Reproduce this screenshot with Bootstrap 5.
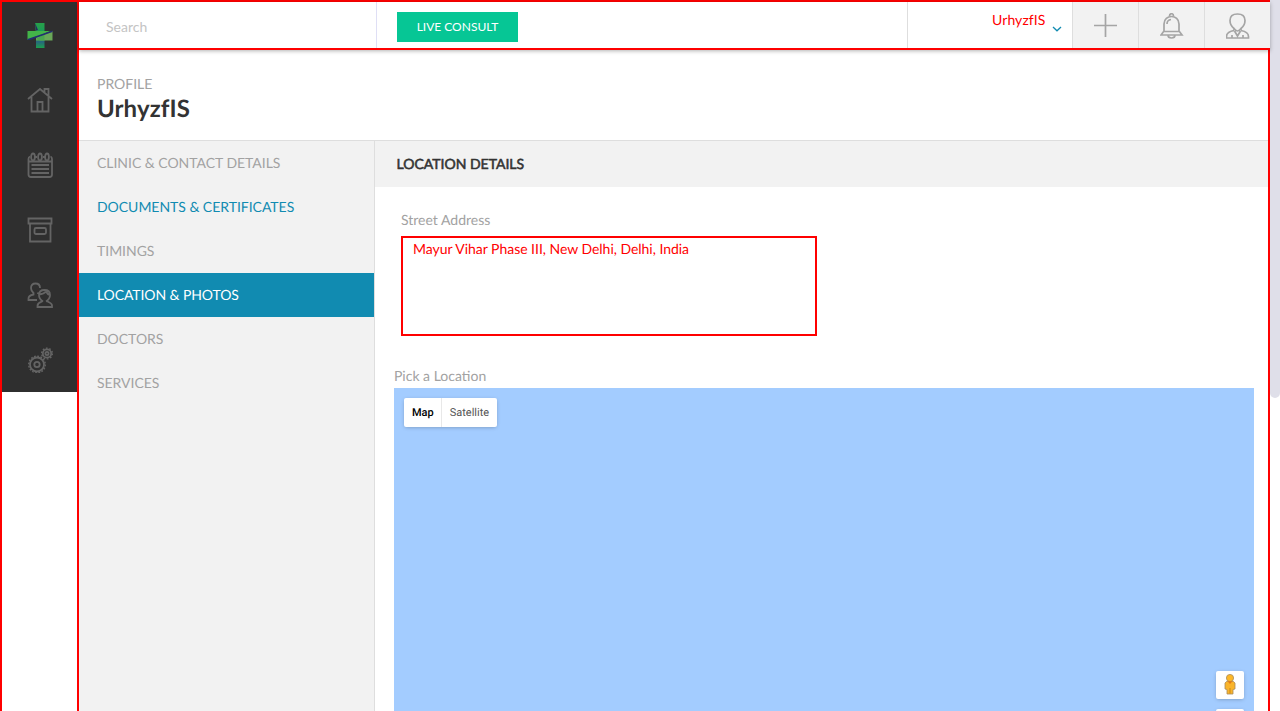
<!DOCTYPE html>
<html lang="en">
<head>
<meta charset="utf-8">
<meta name="viewport" content="width=device-width, initial-scale=1">
<title>Profile</title>
<link href="https://cdn.jsdelivr.net/npm/bootstrap@5.3.0/dist/css/bootstrap.min.css" rel="stylesheet">
<style>
body{font-family:Lato,sans-serif;font-size:14px;line-height:20px;color:#333;height:100vh;overflow:hidden;background:#fff;text-rendering:geometricPrecision}
.shell{border:2px solid red;border-width:2px 0 0 2px;height:100vh;width:1270px}
.rail{width:77px;border-right:2px solid red}
.rail nav{background:#2f2f2f;height:390px}
.rail nav a{height:65px;padding-top:20px}
.rail svg{width:26px;height:26px;display:block;fill:none;stroke:#646464;stroke-width:1.8}
.topbar{height:48px;border-bottom:2px solid red;box-shadow:0 1px 4px rgba(0,0,0,.3);position:relative;background:#fff}
.search{width:298px;border-right:1px solid #dfdff5}
.search input{font-size:14px;padding:2px 0 0 27px;color:#999}
.search input::placeholder{color:#c4c4c4;opacity:1}
.consult{background:#06c695;color:#fff;font-size:12px;line-height:18px;width:121px;height:30px;border-radius:0;margin:10px 0 0 20px;padding:6px 0}
.account{width:165px;border-left:1px solid #dedede;color:red;padding:8px 10px 0 84px}
.account span{letter-spacing:.1px}
.tool{width:66px;background:#f2f2f2;border-left:1px solid #dedede;padding:2px 0 0}
.tool svg{fill:none;stroke:#a5a5a5;stroke-width:1.7}
.page{border-right:2px solid red}
.title{height:91px;border-bottom:1px solid #dedede;padding:24px 18px 0}
.title h1{font-size:24px;line-height:30px;font-weight:700;color:#333;letter-spacing:.1px}
.soft{color:#a2a2a2}
.menu{width:296px;background:#f2f2f2;border-right:1px solid #dedede}
.menu a:not([href]){height:44px;padding:12px 18px;color:#a2a2a2;text-decoration:none;display:block;letter-spacing:-.03px}
.menu a.visited-step:not([href]){color:#118bb1}
.menu a.current:not([href]){background:#118bb1;color:#fff;letter-spacing:-.1px}
.section-head{height:46px;background:#f2f2f2;padding:13px 21.5px;font-size:14px;-webkit-text-stroke:.55px #333}
.address{width:416px;height:100px;border:2px solid red;border-radius:0;color:red;font:14px/20px Lato,sans-serif;letter-spacing:-.03px;text-rendering:geometricPrecision;padding:1px 10px;resize:none;display:block;margin:6px 0 0 26px;background:#fff;outline:0;overflow:hidden}
.map{background:#a3ccff;margin:2px 14px 0 19px;position:relative;overflow:hidden}
.map-type{left:10px;top:10px;height:29px;background:#fff;border-radius:2px;box-shadow:0 1px 4px -1px rgba(0,0,0,.3);font:11px/29px Roboto,sans-serif;color:#565656}
.map-type span{padding:0 8px}
.map-type span:first-child{font-weight:500;color:#000;border-right:1px solid #e8e8e8;padding-right:7px}
.map-control{right:10px;width:28px;height:28px;background:#fff;border-radius:2px;box-shadow:0 1px 4px -1px rgba(0,0,0,.3)}
.scroll-thumb{width:10px;height:403px;margin-top:-5px;border-radius:5px;background:#dfdfe9}
</style>
</head>
<body class="d-flex">
<div class="shell d-flex flex-shrink-0">
  <aside class="rail flex-shrink-0">
    <nav>
      <a class="d-flex justify-content-center"><svg viewBox="0 0 26 26" stroke="none"><defs><linearGradient id="leaf" x2="0" y2="1"><stop stop-color="#27a149"/><stop offset=".55" stop-color="#169660"/><stop offset=".75" stop-color="#28657e"/><stop offset="1" stop-color="#1ba04d"/></linearGradient></defs><g stroke="none"><path d="M8 1h9.500v25H9V13z" fill="url(#leaf)"/><path d="M.5 9h23L.5 18z" fill="#43b449"/><path d="M25.500 9v9.500H9v-3z" fill="#69a858"/><path d="M17.500 12v6.500H13L9 17z" fill="#4aa64f"/><path d="M.5 17L25.500 8.500V10L3 18H.5z" fill="#222e70"/><path d="M8 1l3 7-2 .5z" fill="#29295f"/></g></svg></a>
      <a class="d-flex justify-content-center"><svg viewBox="0 0 26 26"><path d="M1 12L13 2l12 10M4.500 10v14.500h17V10M17.500 5V2h4v7M10.500 24V15h5v9"/></svg></a>
      <a class="d-flex justify-content-center"><svg viewBox="0 0 26 26"><path d="M3 4.500Q1.500 5 1.500 7v15.500q0 2.500 2.500 2.500h18.500q2.500 0 2.500-2.500V7q0-2-1.500-2.500M8 5h2M16 5h2M2 9.500h23M4.500 13h17.500M4.500 17h17.500M4.500 21h17.500"/><g><ellipse cx="6" cy="5" rx="1.900" ry="3.500"/><ellipse cx="13" cy="5" rx="1.900" ry="3.500"/><ellipse cx="20" cy="5" rx="1.900" ry="3.500"/></g></svg></a>
      <a class="d-flex justify-content-center"><svg viewBox="0 0 26 26"><path d="M1.500 1.500h23v5h-23zM3 6.500v18h20.500v-18"/><rect x="7.500" y="11" width="11.500" height="6" rx="1.500"/></svg></a>
      <a class="d-flex justify-content-center"><svg viewBox="0 0 26 26"><path d="M10 18H1.500v-1.500q0-3 5-4V11C4.500 9.500 4 8 4 6q0-4.500 4.500-4.500T13 6M11 10.500v1.500M16 19.500c-2.500-1.500-4-4-4-6.500q0-5 5.500-5t5.500 5c0 2.500-1.500 5-4 6.500M12 12.500q5-.5 7-3 1.500 3 4 3.500M15.500 19c0 1.200-5 .8-5 5V25h14.500v-1.500c0-3-5-3.500-5-4.500"/></svg></a>
      <a class="d-flex justify-content-center"><svg viewBox="0 0 26 26"><circle cx="10" cy="17.500" r="7"/><circle cx="10" cy="17.500" r="2.700"/><circle cx="10" cy="17.500" r="8.300" stroke-width="1.400" stroke-dasharray="1.800 1.460"/><circle cx="20" cy="6.500" r="4.200"/><circle cx="20" cy="6.500" r="1.600"/><circle cx="20" cy="6.500" r="5.400" stroke-width="1.400" stroke-dasharray="1.700 1.690"/></svg></a>
    </nav>
  </aside>
  <div class="flex-grow-1 d-flex flex-column">
    <header class="topbar d-flex flex-shrink-0">
      <div class="search"><input class="form-control border-0 bg-transparent rounded-0 h-100" placeholder="Search" aria-label="Search"></div>
      <button class="btn consult border-0">LIVE CONSULT</button>
      <div class="account ms-auto d-flex justify-content-between"><span>UrhyzfIS</span><svg class="mt-3" width="10" height="10" viewBox="0 0 10 10" fill="none" stroke="#118bb1" stroke-width="1.300"><path d="M1 1l4 3.800L9 1"/></svg></div>
      <div class="tool d-flex justify-content-center align-items-center"><svg width="24" height="24" viewBox="0 0 24 24"><path d="M11.500 0v23M0 11.500h23"/></svg></div>
      <div class="tool d-flex justify-content-center align-items-center"><svg width="24" height="26" viewBox="0.5 0 24 26"><path d="M10 3c0-3 4-3 4 0M4.500 18V11c0-10 15-10 15 0v7l3 4h-21zM4.500 18.500h15M8.500 22c0 4 7 4 7 0M7.500 11q0-4 4-4.500"/></svg></div>
      <div class="tool d-flex justify-content-center align-items-center"><svg width="24" height="26" viewBox="0.5 0 24 26"><path d="M8.500 17.500v-2C6 13.500 4.500 10.500 4.500 7.500q0-6.500 7.500-6.500t7.500 6.500c0 3-1.500 6-4 8v2M8.500 15.500q1.500 2.500 3.500 2.500t3.500-2.500M9 18l3 5 3-5M8.500 17.500C3 18.500 1 20 1 23.500V25h22v-1.500c0-3.500-2-5-7.500-6M6.500 22v3M17.500 22v3"/></svg></div>
    </header>
    <main class="page flex-grow-1 d-flex flex-column">
      <div class="title flex-shrink-0"><div class="soft">PROFILE</div><h1 class="m-0">UrhyzfIS</h1></div>
      <div class="d-flex flex-grow-1">
        <nav class="menu flex-shrink-0">
          <a>CLINIC &amp; CONTACT DETAILS</a>
          <a class="visited-step">DOCUMENTS &amp; CERTIFICATES</a>
          <a>TIMINGS</a>
          <a class="current">LOCATION &amp; PHOTOS</a>
          <a>DOCTORS</a>
          <a>SERVICES</a>
        </nav>
        <section class="flex-grow-1 d-flex flex-column">
          <h2 class="section-head m-0 lh-sm fw-normal"><span class="d-block" style="line-height:20px">LOCATION DETAILS</span></h2>
          <label class="soft" for="street" style="padding:23px 0 0 26px">Street Address</label>
          <textarea id="street" class="address" spellcheck="false">Mayur Vihar Phase III, New Delhi, Delhi, India</textarea>
          <div class="soft" style="padding:30px 0 0 19px">Pick a Location</div>
          <div class="map flex-grow-1">
            <div class="map-type position-absolute d-flex"><span>Map</span><span>Satellite</span></div>
            <div class="map-control position-absolute" style="top:283px"><svg class="d-block mx-auto" width="14" height="28" viewBox="0 0 14 28"><path d="M3.500 10.500L2 12v6l2 .5v4.500h6v-4.500l2-.5v-6l-1.500-1.500z" fill="#f9b42b" stroke="#a98c5c" stroke-width=".8"/><circle cx="7" cy="7" r="3.600" fill="#fdb827" stroke="#a98c5c" stroke-width=".8"/><path d="M4.500 10.300h5l-2.500 2.700z" fill="#e77b13"/><path d="M7 17v5.500" stroke="#c98818"/></svg></div>
            <div class="map-control position-absolute" style="top:321px"></div>
          </div>
        </section>
      </div>
    </main>
  </div>
</div>
<div class="scroll-thumb"></div>
<script src="https://cdn.jsdelivr.net/npm/bootstrap@5.3.0/dist/js/bootstrap.bundle.min.js"></script>
</body>
</html>
